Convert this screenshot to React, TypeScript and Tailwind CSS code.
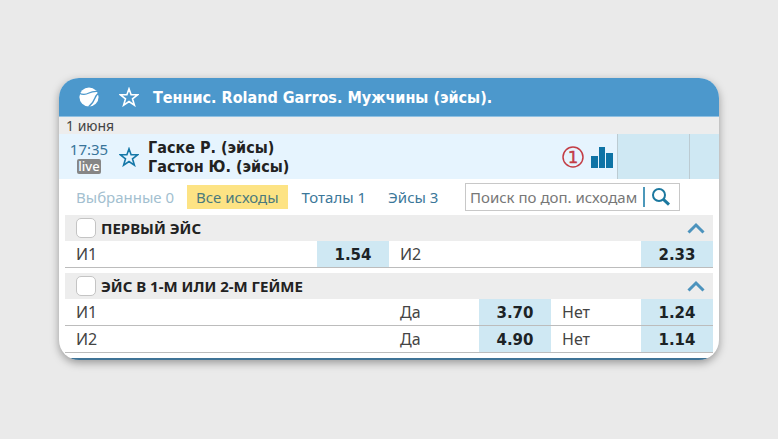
import { useState } from "react";

interface Outcome {
  name: string;
  odd: string;
}

interface MarketRow {
  label?: string;
  outcomes: Outcome[];
}

interface Market {
  id: string;
  title: string;
  rows: MarketRow[];
}

const tabs = [
  { id: "selected", label: "Выбранные 0", disabled: true },
  { id: "all", label: "Все исходы" },
  { id: "totals", label: "Тоталы 1" },
  { id: "aces", label: "Эйсы 3" },
];

const markets: Market[] = [
  {
    id: "first-ace",
    title: "ПЕРВЫЙ ЭЙС",
    rows: [
      {
        outcomes: [
          { name: "И1", odd: "1.54" },
          { name: "И2", odd: "2.33" },
        ],
      },
    ],
  },
  {
    id: "ace-in-game",
    title: "ЭЙС В 1-М ИЛИ 2-М ГЕЙМЕ",
    rows: [
      {
        label: "И1",
        outcomes: [
          { name: "Да", odd: "3.70" },
          { name: "Нет", odd: "1.24" },
        ],
      },
      {
        label: "И2",
        outcomes: [
          { name: "Да", odd: "4.90" },
          { name: "Нет", odd: "1.14" },
        ],
      },
    ],
  },
];

function StarIcon() {
  return (
    <svg viewBox="0 0 20 20" className="size-5" fill="none" stroke="currentColor" strokeWidth="1.6">
      <path d="M10 1.8 L12.1 7.7 L18.6 7.8 L13.5 11.8 L15.4 18.2 L10 14.5 L4.6 18.2 L6.5 11.8 L1.4 7.8 L7.9 7.7 Z" />
    </svg>
  );
}

function BallIcon() {
  return (
    <svg viewBox="0 0 20 20" className="size-5">
      <circle cx="10" cy="10" r="9.6" fill="#fff" />
      <g fill="none" stroke="#4c98cc" strokeWidth="1.4">
        <path d="M0 6 C3.5 8 7 7.6 10 6 C12.6 4.6 14.6 4.2 18.4 4.4" />
        <path d="M20 6.4 C17.6 7 16.8 8.8 16 11 C15 14 13.4 16.4 9.6 19.8" />
      </g>
    </svg>
  );
}

function MarketSection({ market }: { market: Market }) {
  const [open, setOpen] = useState(true);

  return (
    <section className="mb-[5px]">
      {/* Market title */}
      <div className="flex h-[26px] items-center bg-[#ededed] pr-2 pl-[11px]">
        <label className="flex items-center gap-[5px] text-[15px] leading-5 font-bold text-[#222]">
          <input
            type="checkbox"
            className="size-5 appearance-none rounded-[5px] border border-[#c4c4c4] bg-white checked:bg-[#4c98cc]"
          />
          {market.title}
        </label>
        <button
          aria-label={market.title}
          aria-expanded={open}
          onClick={() => setOpen(!open)}
          className="ml-auto"
        >
          <svg viewBox="0 0 18 12" className="h-3 w-[18px]" fill="none" stroke="#4c93bd" strokeWidth="3">
            <path d="M1.5 10.5 L9 3 L16.5 10.5" />
          </svg>
        </button>
      </div>

      {/* Outcomes */}
      {open && (
        <table className="w-full table-fixed border-separate border-spacing-0 text-base leading-5 text-[#444]">
          <colgroup>
            {market.rows[0].label && <col />}
            {market.rows[0].outcomes.map((outcome) => [
              <col key={outcome.name} className={market.rows[0].label ? "w-[90px]" : ""} />,
              <col key={outcome.odd} className="w-[72px]" />,
            ])}
          </colgroup>
          <tbody>
            {market.rows.map((row, i) => (
              <tr key={i} className="h-[27px] *:border-b *:border-[#bcbcbc]">
                {row.label && <td className="pl-[11px]">{row.label}</td>}
                {row.outcomes.map((outcome) => [
                  <td key={outcome.name} className="pl-[11px]">
                    {outcome.name}
                  </td>,
                  <td key={outcome.odd} className="bg-[#cfe8f3]">
                    <button className="w-full text-center font-['DejaVu_Sans',sans-serif] text-[15px] font-bold text-[#1c2326]">
                      {outcome.odd}
                    </button>
                  </td>,
                ])}
              </tr>
            ))}
          </tbody>
        </table>
      )}
    </section>
  );
}

export default function App() {
  const [activeTab, setActiveTab] = useState("all");

  return (
    <main className="min-h-screen bg-[#eaeaea] px-[59px] py-[78px] font-['Noto_Sans',sans-serif]">
      <div className="overflow-hidden rounded-[20px] bg-white shadow-[0_3px_8px_rgba(0,0,0,0.35)]">
        {/* Tournament */}
        <header className="flex h-[39px] items-center border-b border-[#8fc0e2] bg-[#4c98cc] pl-5 text-white">
          <BallIcon />
          <button aria-label="В избранное" className="ml-5">
            <StarIcon />
          </button>
          <h1 className="ml-3.5 pt-0.5 font-['DejaVu_Sans_Condensed','DejaVu_Sans',sans-serif] text-base leading-5 font-bold">
            Теннис. Roland Garros. Мужчины (эйсы).
          </h1>
        </header>

        <p className="bg-[#ededed] px-[7px] text-sm leading-[17px] text-[#444]">1 июня</p>

        {/* Match */}
        <div className="flex h-[45px] items-center bg-[#e6f4fe]">
          <div className="flex w-[60px] flex-col items-center text-[15px] leading-5 text-[#39749a]">
            <span>17:35</span>
            <span className="rounded-xs bg-[#868686] px-px text-[13px] leading-[15px] font-medium text-white">
              live
            </span>
          </div>
          <button aria-label="Матч в избранное" className="text-[#1779a9]">
            <StarIcon />
          </button>
          <h2 className="ml-[9px] font-['DejaVu_Sans_Condensed','DejaVu_Sans',sans-serif] text-base leading-[19px] font-bold text-[#222]">
            Гаске Р. (эйсы)
            <br />
            Гастон Ю. (эйсы)
          </h2>
          <svg viewBox="0 0 22 22" className="ml-auto size-[22px]" fill="none" stroke="#c33d45">
            <circle cx="11" cy="11" r="10" strokeWidth="1.5" />
            <text
              x="11"
              y="17"
              textAnchor="middle"
              fill="#c33d45"
              stroke="#c33d45"
              strokeWidth="0.5"
              className="font-['DejaVu_Sans',sans-serif] text-base"
            >
              1
            </text>
          </svg>
          <button aria-label="Статистика" className="mr-1 ml-[7px]">
            <svg viewBox="0 0 22 22" className="size-[22px]" fill="#0e73a5">
              <path d="M0 10h7v12H0zM8 1h6v21H8zM15 7h7v15h-7z" />
            </svg>
          </button>
          <div className="h-full w-[72px] border-l border-[#bccbd2] bg-[#cfe8f3]" />
          <div className="h-full w-[30px] border-l border-[#bccbd2] bg-[#cfe8f3]" />
        </div>

        {/* Filters */}
        <div className="flex h-9 items-center pr-[39px] pl-2 text-[15px] leading-5 text-[#3b7799]">
          {tabs.map((tab) => (
            <button
              key={tab.id}
              disabled={tab.disabled}
              onClick={() => setActiveTab(tab.id)}
              className={`h-6 px-[9px] whitespace-nowrap disabled:text-[#a3bfd0] ${
                activeTab === tab.id ? "mr-[5px] ml-1 bg-[#fde384] text-[#4b7a7c]" : "mr-1 nth-[1]:mr-0"
              }`}
            >
              {tab.label}
            </button>
          ))}
          <div className="ml-auto flex h-7 w-[215px] items-center border border-[#c8c8c8]">
            <input
              type="text"
              aria-label="Поиск по доп. исходам"
              placeholder="Поиск по доп. исходам"
              className="min-w-0 flex-1 pl-1 outline-none placeholder:text-[#777]"
            />
            <button aria-label="Найти" className="h-5 border-l-2 border-[#4c98ba] pr-2 pl-[6px]">
              <svg viewBox="0 0 20 20" className="size-5" fill="none" stroke="#1b789f">
                <circle cx="8" cy="8" r="6" strokeWidth="2" />
                <path d="M12.4 12.4 L18 17.6" strokeWidth="3" />
              </svg>
            </button>
          </div>
        </div>

        {/* Markets */}
        <div className="px-1.5">
          {markets.map((market) => (
            <MarketSection key={market.id} market={market} />
          ))}
        </div>
        <div className="h-0.5 bg-[#3f7396]" />
      </div>
    </main>
  );
}
